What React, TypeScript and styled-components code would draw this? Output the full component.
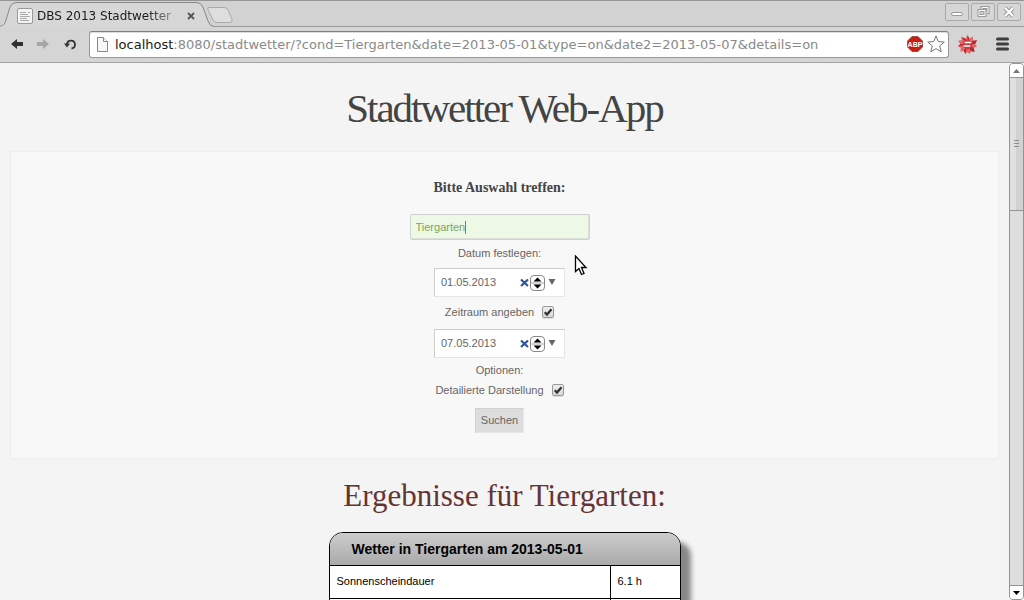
import React from "react";
import styled, { createGlobalStyle } from "styled-components";

const GlobalStyle = createGlobalStyle`
  *, *::before, *::after { box-sizing: border-box; }
  html, body { margin: 0; height: 100%; }
  #root { height: 100%; }
  body { overflow: hidden; background: #f4f4f4; }
  button, input { font: inherit; color: inherit; margin: 0; padding: 0; border: 0; background: none; outline: 0; }
  button { display: flex; align-items: center; justify-content: center; }
  svg { display: block; flex: none; }
`;

const Browser = styled.div`
  display: flex;
  flex-direction: column;
  height: 100vh;
  font-family: "DejaVu Sans", sans-serif;
`;

const TabStrip = styled.header`
  display: flex;
  justify-content: space-between;
  height: 27px;
  background: #d2d2d2;
  border-top: 1px solid #959595;
  box-shadow: inset 0 -1px 0 #9b9b9b;
`;

const Tabs = styled.div`
  display: flex;
`;

const Tab = styled.div`
  position: relative;
  display: flex;
  align-items: center;
  width: 214px;
  height: 26px;
  padding: 4px 0 0 17px;
`;

const TabShape = styled.svg`
  position: absolute;
  left: 0;
  top: 0;
`;

const TabIcon = styled.svg`
  position: relative;
`;

const TabTitle = styled.span`
  position: relative;
  width: 145px;
  margin-left: 4px;
  white-space: nowrap;
  font-size: 12px;
  line-height: 16px;
  color: #1c1c1c;
  mask-image: linear-gradient(to right, #000 76%, transparent 104%);
`;

const TabClose = styled.button`
  position: relative;
  width: 12px;
  height: 16px;
  margin-left: 3px;
`;

const NewTab = styled.button`
  width: 28px;
  height: 26px;
  margin-left: -8px;
  position: relative;
`;

const WindowButtons = styled.div`
  display: flex;
  gap: 2px;
  padding: 2px 3px 0 0;
`;

const WindowButton = styled.button`
  width: 24px;
  height: 18px;
  border: 1px solid #aaa;
  border-radius: 2px;
  background: #d6d6d6;
`;

const Toolbar = styled.nav`
  display: flex;
  align-items: center;
  height: 36px;
  padding: 0 15px 1px 8px;
  background: #d5d5d5;
  border-bottom: 1px solid #a3a3a3;
`;

const ToolButton = styled.button<{ $gap?: number }>`
  width: 18px;
  height: 20px;
  margin-right: ${(p) => p.$gap ?? 0}px;
`;

const ExtensionButton = styled.button`
  width: 20px;
  height: 20px;
  margin: 0 18px 0 8px;
`;

const MenuButton = styled.button`
  width: 14px;
  height: 20px;
`;

const AddressBar = styled.div`
  display: flex;
  flex: 1;
  align-items: center;
  height: 27px;
  padding: 0 3px 0 6px;
  background: #fff;
  border: 1px solid #989898;
  border-top-color: #808080;
  border-radius: 3px;
  box-shadow: inset 0 1px 0 #ddd;
`;

const Address = styled.a`
  flex: 1;
  margin-left: 6px;
  padding-top: 2px;
  font-size: 13px;
  line-height: 18px;
  white-space: nowrap;
  text-decoration: none;
  color: #8a8a8a;
`;

const Host = styled.span`
  color: #202020;
`;

const Viewport = styled.div`
  display: flex;
  flex: 1;
  min-height: 0;
  background: #f4f4f4;
`;

const Page = styled.main`
  flex: 1;
  min-width: 0;
  overflow: hidden;
  padding: 0 10px;
  font-family: "Liberation Sans", Arial, sans-serif;
  font-size: 11px;
  color: #666;
`;

const PageTitle = styled.h1`
  margin: 22px 0 20px;
  font: 400 41px/46px "Liberation Serif", "Times New Roman", serif;
  letter-spacing: -2px;
  text-align: center;
  color: #444;
`;

const SearchForm = styled.form`
  display: flex;
  flex-direction: column;
  align-items: center;
  height: 308px;
  padding: 27px 10px 0 0;
  background: #f8f8f8;
  border: 1px solid #eee;
`;

const FormTitle = styled.h2`
  margin: 0 0 17px;
  font: 700 14px/18px "Liberation Serif", "Times New Roman", serif;
  color: #444;
`;

const PlaceField = styled.div`
  display: flex;
  align-items: center;
  width: 180px;
  height: 26px;
  padding: 0 5px;
  background: #edf9e4;
  border: 1px solid #d0d2ce;
  border-radius: 2px;
  box-shadow: inset -1px -1px 0 #dde0da;
  color: #7aa661;
`;

const PlaceInput = styled.input`
  field-sizing: content;
`;

const Caret = styled.span`
  width: 1px;
  height: 13px;
  background: #5d9a3c;
`;

const Label = styled.label`
  height: 28px;
  line-height: 26px;
`;

const CheckLabel = styled.label<{ $height: number }>`
  display: flex;
  align-items: center;
  gap: 8px;
  height: ${(p) => p.$height}px;
  padding-bottom: 2px;
`;

const CheckBox = styled.input`
  appearance: none;
  width: 12px;
  height: 12px;
  border: 1px solid #999;
  border-radius: 2px;
  background: linear-gradient(#eee, #d8d8d8);
  box-shadow: 0 1px 1px #ddd;
`;

const CheckWrap = styled.span`
  position: relative;
  display: flex;
`;

const CheckMark = styled.svg`
  position: absolute;
  left: 0;
  top: 0;
  pointer-events: none;
`;

const DateField = styled.div`
  display: flex;
  align-items: center;
  width: 131px;
  height: 29px;
  padding: 0 8px 0 6px;
  background: #fff;
  border: 1px solid #e6e6e6;
  border-top-color: #ccc;
  border-left-color: #ccc;
`;

const DateInput = styled.input`
  flex: 1;
  min-width: 0;
  padding-bottom: 2px;
`;

const DateButton = styled.button<{ $gap?: number }>`
  margin-left: ${(p) => p.$gap ?? 0}px;
`;

const OptionsTitle = styled.span`
  height: 22px;
  line-height: 24px;
`;

const Submit = styled.button`
  height: 25px;
  padding: 0 5px 2px;
  margin-top: 7px;
  background: #ddd;
  border: 1px solid #d2d2d2;
  border-right-color: #e6e6e6;
  border-bottom-color: #e6e6e6;
`;

const ResultTitle = styled.h2`
  margin: 18px 0;
  font: 400 31px/37px "Liberation Serif", "Times New Roman", serif;
  text-align: center;
  color: #633;
`;

const WeatherTable = styled.table`
  width: 352px;
  margin: 0 auto;
  border: 1px solid #000;
  border-radius: 14px;
  border-spacing: 0;
  background: #fff;
  overflow: hidden;
  box-shadow: 10px 10px 5px #888;
  font-size: 11px;
  color: #000;
`;

const TableHead = styled.th`
  height: 33px;
  padding: 0 22px;
  text-align: left;
  font-size: 14px;
  background: linear-gradient(#ccc, #aaa);
  border-bottom: 1px solid #000;
`;

const Cell = styled.td`
  height: 33px;
  padding: 0 7px 2px;
  border-bottom: 1px solid #000;

  & + & {
    width: 70px;
    border-left: 1px solid #000;
  }
`;

const ScrollBar = styled.aside`
  display: flex;
  flex-direction: column;
  width: 15px;
  background: #dedede;
  border: 1px solid #949494;
  border-radius: 4px;
  overflow: hidden;
`;

const ScrollButton = styled.button`
  height: 13px;
  background: #fff;
`;

const Thumb = styled.div`
  display: flex;
  align-items: center;
  justify-content: center;
  height: 25%;
  border: solid #949494;
  border-width: 1px 0;
  background: linear-gradient(to right, #e0e0e0 50%, #d2d2d2 50%);
`;

const Track = styled.div`
  flex: 1;
  border-bottom: 1px solid #949494;
`;

const Pointer = styled.svg`
  position: absolute;
  left: 574px;
  top: 255px;
  pointer-events: none;
`;

function Check({ id }: { id: string }) {
  return (
    <CheckWrap>
      <CheckBox type="checkbox" id={id} defaultChecked />
      <CheckMark width="12" height="12" viewBox="0 0 12 12">
        <path d="M2.700 6.300 5 8.600 9.500 3.200" fill="none" stroke="#333" strokeWidth="2.300" />
      </CheckMark>
    </CheckWrap>
  );
}

function DatePicker({ id, value }: { id: string; value: string }) {
  return (
    <DateField>
      <DateInput id={id} aria-label="Datum" defaultValue={value} />
      <DateButton type="button" aria-label="Datum löschen">
        <svg width="9" height="9" viewBox="0 0 9 9">
          <path d="M1 1.500 8 8M8 1.500 1 8" stroke="#2c549b" strokeWidth="2.200" />
        </svg>
      </DateButton>
      <DateButton type="button" aria-label="Datum ändern" $gap={1}>
        <svg width="15" height="16" viewBox="0 0 15 16">
          <rect x=".5" y=".5" width="14" height="15" rx="3.500" fill="#fff" stroke="#888" />
          <path d="M1 8h13" stroke="#aaa" />
          <path d="M7.500 2.500 11.500 6.500h-8zM7.500 13.500 11.500 9.500h-8z" fill="#000" />
        </svg>
      </DateButton>
      <DateButton type="button" aria-label="Kalender öffnen" $gap={3}>
        <svg width="8" height="9" viewBox="0 0 8 9">
          <path d="M.5 1h7L4 7z" fill="#666" />
        </svg>
      </DateButton>
    </DateField>
  );
}

export default function App() {
  return (
    <Browser>
      <GlobalStyle />
      <TabStrip>
        <Tabs>
          <Tab>
            <TabShape width="214" height="26" viewBox="0 0 214 26">
              <path d="M0 26V25C4 25 5 22 6 19L10 6Q12 1.500 16 1.500H197Q201 1.500 203 6L208 20Q210 25.500 214 25.500V26z" fill="#d7d7d7" />
              <path d="M0 25C4 25 5 22 6 19L10 6Q12 1.500 16 1.500H197Q201 1.500 203 6L208 20Q210 25.500 214 25.500" fill="none" stroke="#888" />
            </TabShape>
            <TabIcon width="16" height="16" viewBox="0 0 16 16">
              <rect x=".5" y=".5" width="15" height="15" rx="1.500" fill="#f3f3f3" stroke="#999" />
              <path d="M3 4.500h6M11 4.500h2M3 6.500h8M3 8.500h10M3 10.500h7M3 12.500h9" stroke="#aaa" />
            </TabIcon>
            <TabTitle>DBS 2013 Stadtwetter</TabTitle>
            <TabClose aria-label="Tab schließen">
              <svg width="8" height="8" viewBox="0 0 8 8">
                <path d="m1 1 6 6m0-6L1 7" stroke="#555" strokeWidth="1.800" />
              </svg>
            </TabClose>
          </Tab>
          <NewTab aria-label="Neuer Tab">
            <svg width="28" height="26" viewBox="0 0 28 26">
              <path d="M3 6.500H18Q21 6.500 22 9L26 18Q27 21.500 24 21.500H11Q8 21.500 7 19L2 9Q1 6.500 3 6.500z" fill="#dedede" stroke="#aaa" />
            </svg>
          </NewTab>
        </Tabs>
        <WindowButtons>
          <WindowButton aria-label="Minimieren">
            <svg width="12" height="12" viewBox="0 0 12 12">
              <rect x=".5" y="6.500" width="11" height="3" rx="1.500" fill="#fff" stroke="#999" />
            </svg>
          </WindowButton>
          <WindowButton aria-label="Wiederherstellen">
            <svg width="13" height="12" viewBox="0 0 13 12">
              <path d="M5 1.500h6v5H5z" fill="none" stroke="#999" strokeWidth="3" />
              <path d="M5 1.500h6v5H5z" fill="none" stroke="#fff" />
              <path d="M2 4.500h6v5H2z" fill="#d6d6d6" stroke="#999" strokeWidth="3" />
              <path d="M2 4.500h6v5H2z" fill="none" stroke="#fff" />
            </svg>
          </WindowButton>
          <WindowButton aria-label="Schließen">
            <svg width="12" height="12" viewBox="0 0 12 12">
              <path d="m2 2 8 8m0-8-8 8" stroke="#999" strokeWidth="4" />
              <path d="m2 2 8 8m0-8-8 8" stroke="#fff" strokeWidth="2" />
            </svg>
          </WindowButton>
        </WindowButtons>
      </TabStrip>

      <Toolbar>
        <ToolButton aria-label="Zurück" $gap={8}>
          <svg width="12" height="10" viewBox="0 0 12 10">
            <path d="M0 5 6 0v3h6v4H6v3z" fill="#303030" />
          </svg>
        </ToolButton>
        <ToolButton aria-label="Vorwärts" $gap={9}>
          <svg width="12" height="10" viewBox="0 0 12 10">
            <path d="M12 5 6 0v3H0v4h6v3z" fill="#a6a6a6" />
          </svg>
        </ToolButton>
        <ToolButton aria-label="Neu laden" $gap={10}>
          <svg width="14" height="13" viewBox="0 0 14 13">
            <path d="M4 7V6a4 4 0 1 1 4.500 4.500" fill="none" stroke="#333" strokeWidth="1.800" />
            <path d="M1 5.500h6L4 9.500z" fill="#333" />
          </svg>
        </ToolButton>
        <AddressBar>
          <svg width="13" height="15" viewBox="0 0 13 15">
            <path d="M1.500.5h6l4 4v10h-10z" fill="#f7f7f7" stroke="#888" />
            <path d="M7.500.5v4h4" fill="#fff" stroke="#888" />
          </svg>
          <Address href="#">
            <Host>localhost</Host>:8080/stadtwetter/?cond=Tiergarten&amp;date=2013-05-01&amp;type=on&amp;date2=2013-05-07&amp;details=on
          </Address>
          <ToolButton aria-label="Adblock Plus" $gap={3}>
            <svg width="16" height="16" viewBox="0 0 16 16">
              <path d="M5 .5h6L15.500 5v6L11 15.500H5L.5 11V5z" fill="#c81e12" stroke="#9d5048" />
              <text x="8" y="11" textAnchor="middle" fontSize="7" fontWeight="700" fontFamily="Liberation Sans, sans-serif" fill="#fff">ABP</text>
            </svg>
          </ToolButton>
          <ToolButton aria-label="Lesezeichen">
            <svg width="18" height="18" viewBox="0 0 18 18">
              <path d="m9 1 2.300 5.600 6 .4-4.600 3.900 1.500 6L9 13.600l-5.200 3.300 1.500-6L.7 7l6-.4z" fill="#fff" stroke="#777" strokeLinejoin="round" />
            </svg>
          </ToolButton>
        </AddressBar>
        <ExtensionButton aria-label="Erweiterung">
          <svg width="19" height="19" viewBox="0 0 20 20">
            <path d="m10 0 2 4 3.500-2.500.5 4.500 4-.5-2 4 2 2.500-3.500 1.500 1 4-4-.5-1 3-3-2L8 20l-2-3.500L2.500 17.500l.5-4-3-1.500 2.500-2.500L0 6l4-.5L3.500 2 8 4z" fill="#e0666a" />
            <path d="m10 0 2 4-2 6zM16 6l4-.5-2 4-8 .5zM17.500 17.500l-4-.5-3.500-7 6.500 3.500zM8 20l-2-3.500L10 10zM0 12l2.500-2.500H10zM3.500 2 8 4l2 6z" fill="#b52a33" />
            <circle cx="10" cy="10" r="5" fill="#cf3a40" />
            <path d="M7 8h7M6 11.500h7" stroke="#fff" strokeWidth="1.600" />
          </svg>
        </ExtensionButton>
        <MenuButton aria-label="Menü">
          <svg width="13" height="14" viewBox="0 0 13 14">
            <path d="M1.500 2h10M1.500 7h10M1.500 12h10" stroke="#3b3f3f" strokeWidth="3" strokeLinecap="round" />
          </svg>
        </MenuButton>
      </Toolbar>

      <Viewport>
        <Page>
          <PageTitle>Stadtwetter Web-App</PageTitle>
          <SearchForm onSubmit={(e) => e.preventDefault()}>
            <FormTitle>Bitte Auswahl treffen:</FormTitle>
            <PlaceField>
              <PlaceInput aria-label="Ort" defaultValue="Tiergarten" />
              <Caret />
            </PlaceField>
            <Label htmlFor="date">Datum festlegen:</Label>
            <DatePicker id="date" value="01.05.2013" />
            <CheckLabel htmlFor="range" $height={32}>
              Zeitraum angeben
              <Check id="range" />
            </CheckLabel>
            <DatePicker id="date2" value="07.05.2013" />
            <OptionsTitle>Optionen:</OptionsTitle>
            <CheckLabel htmlFor="details" $height={21}>
              Detailierte Darstellung
              <Check id="details" />
            </CheckLabel>
            <Submit type="submit">Suchen</Submit>
          </SearchForm>

          <ResultTitle>Ergebnisse für Tiergarten:</ResultTitle>
          <WeatherTable>
            <thead>
              <tr>
                <TableHead colSpan={2}>Wetter in Tiergarten am 2013-05-01</TableHead>
              </tr>
            </thead>
            <tbody>
              <tr>
                <Cell>Sonnenscheindauer</Cell>
                <Cell>6.1 h</Cell>
              </tr>
              <tr>
                <Cell />
                <Cell />
              </tr>
            </tbody>
          </WeatherTable>
        </Page>
        <ScrollBar>
          <ScrollButton aria-label="Nach oben">
            <svg width="7" height="4" viewBox="0 0 7 4">
              <path d="M3.500 0 7 4H0z" fill="#777" />
            </svg>
          </ScrollButton>
          <Thumb>
            <svg width="5" height="7" viewBox="0 0 5 7">
              <path d="M0 .5h5M0 3.500h5M0 6.500h5" stroke="#8c8c8c" />
            </svg>
          </Thumb>
          <Track />
          <ScrollButton aria-label="Nach unten">
            <svg width="7" height="4" viewBox="0 0 7 4">
              <path d="M3.500 4 7 0H0z" fill="#000" />
            </svg>
          </ScrollButton>
        </ScrollBar>
      </Viewport>

      <Pointer width="14" height="21" viewBox="0 0 14 21">
        <path d="M1.500 1v15.500l3.500-3 2.500 6 2.500-1-2.500-6H12z" fill="#fff" stroke="#000" strokeWidth="1.300" />
      </Pointer>
    </Browser>
  );
}
